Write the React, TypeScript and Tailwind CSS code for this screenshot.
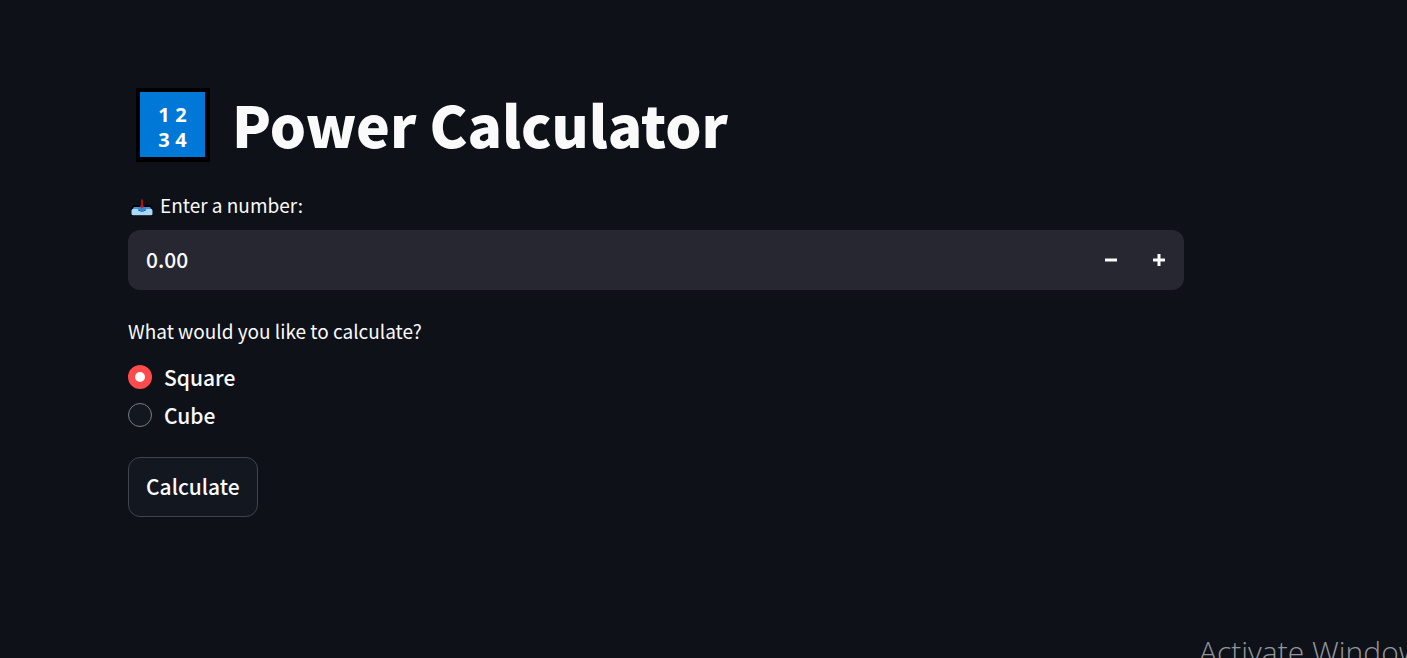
import { useState } from "react";

function NumbersIcon() {
  return (
    <svg viewBox="0 0 74 74" className="size-[74px] shrink-0" role="img" aria-label="Numbers">
      <rect width="74" height="74" fill="#000" />
      <rect x="4" y="4" width="65" height="65" fill="#0078d7" />
      <g fill="#fff" fontFamily="'Open Sans', sans-serif" fontWeight="700" fontSize="20" textAnchor="middle">
        <text x="28" y="34">1</text>
        <text x="45" y="34">2</text>
        <text x="28" y="59">3</text>
        <text x="45" y="59">4</text>
      </g>
    </svg>
  );
}

function InboxIcon() {
  return (
    <svg viewBox="0 -1 24 22" className="h-[22px] w-6 shrink-0" aria-hidden="true">
      <path d="M4 10h16l3 3v8H1v-8z" fill="#000" />
      <path d="M4 12h16l2 3H2z" fill="#3f97df" />
      <path d="M1.500 15.500q0-1.500 1.500-1.500h4.500c.5 1.500 2 2.500 4.500 2.500s4-1 4.500-2.500H21q1.500 0 1.500 1.500V19q0 1.200-1.500 1.200H3q-1.500 0-1.500-1.200z" fill="#a9dafa" />
      <path d="M8 12h8c0 2.800-1.500 4.500-4 4.500s-4-1.700-4-4.500z" fill="#3987d3" />
      <path d="M11.200 4.500h1.600v6h1.700L12 13.500l-2.500-3h1.700z" fill="#c9151e" />
    </svg>
  );
}

const operations = ["Square", "Cube"];

export default function App() {
  const [value, setValue] = useState("0.00");
  const [operation, setOperation] = useState("Square");
  const step = (amount: number) => setValue((Number(value) + amount).toFixed(2));

  return (
    <div className="relative min-h-screen overflow-hidden bg-[#0e1118] font-['Noto_Sans_CJK_SC',sans-serif] text-[#fafafa]">
      <main className="w-full max-w-[1184px] pt-[88px] pl-32">
        <header className="flex items-center gap-[22px] pl-2">
          <NumbersIcon />
          <h1 className="pb-1 text-[57px] leading-[70px] font-black">Power Calculator</h1>
        </header>

        <form onSubmit={(event) => event.preventDefault()}>
          <label htmlFor="number" className="mt-7 flex items-end gap-[6px] pl-[2px] text-[19px] leading-[30px]">
            <span className="pb-1">
              <InboxIcon />
            </span>
            Enter a number:
          </label>
          <div className="mt-[10px] flex h-[60px] items-center overflow-hidden rounded-xl bg-[#262730]">
            <input
              id="number"
              inputMode="decimal"
              value={value}
              onChange={(event) => setValue(event.target.value)}
              className="h-full min-w-0 flex-1 bg-transparent px-[18px] pb-[2px] text-[21px] font-medium outline-none"
            />
            <div className="flex h-full pr-px">
              <button type="button" aria-label="Decrease" onClick={() => step(-0.01)} className="flex h-full w-12 items-center justify-center">
                <svg viewBox="0 0 12 12" className="size-3" aria-hidden="true">
                  <path d="M0 4.500h12v3H0z" fill="currentColor" />
                </svg>
              </button>
              <button type="button" aria-label="Increase" onClick={() => step(0.01)} className="flex h-full w-12 items-center justify-center">
                <svg viewBox="0 0 12 12" className="size-3" aria-hidden="true">
                  <path d="M4.500 0h3v4.500H12v3H7.500V12h-3V7.500H0v-3h4.500z" fill="currentColor" />
                </svg>
              </button>
            </div>
          </div>

          <fieldset className="mt-[26px]">
            <legend className="text-[19px] leading-[30px]">What would you like to calculate?</legend>
            <div className="flex flex-col items-start gap-[2px] pt-[13px]">
              {operations.map((name) => (
                <label key={name} className="flex items-center gap-3 text-[21px] leading-9 font-medium">
                  <input
                    type="radio"
                    name="operation"
                    value={name}
                    checked={operation === name}
                    onChange={() => setOperation(name)}
                    className="size-6 appearance-none rounded-full border border-[#7b7d83] bg-[#131720] checked:border-[7px] checked:border-[#ff4b4b] checked:bg-white"
                  />
                  {name}
                </label>
              ))}
            </div>
          </fieldset>

          <button type="submit" className="mt-6 h-[60px] rounded-xl border border-[#41444c] bg-[#131720] px-[17px] text-[21px] font-medium">
            Calculate
          </button>
        </form>
      </main>

      <div className="pointer-events-none absolute right-0 bottom-0 h-6 w-[208px] overflow-hidden font-['Open_Sans',sans-serif] text-[30px] leading-9 font-light whitespace-nowrap text-[#94969a]">
        Activate Windows
      </div>
    </div>
  );
}
